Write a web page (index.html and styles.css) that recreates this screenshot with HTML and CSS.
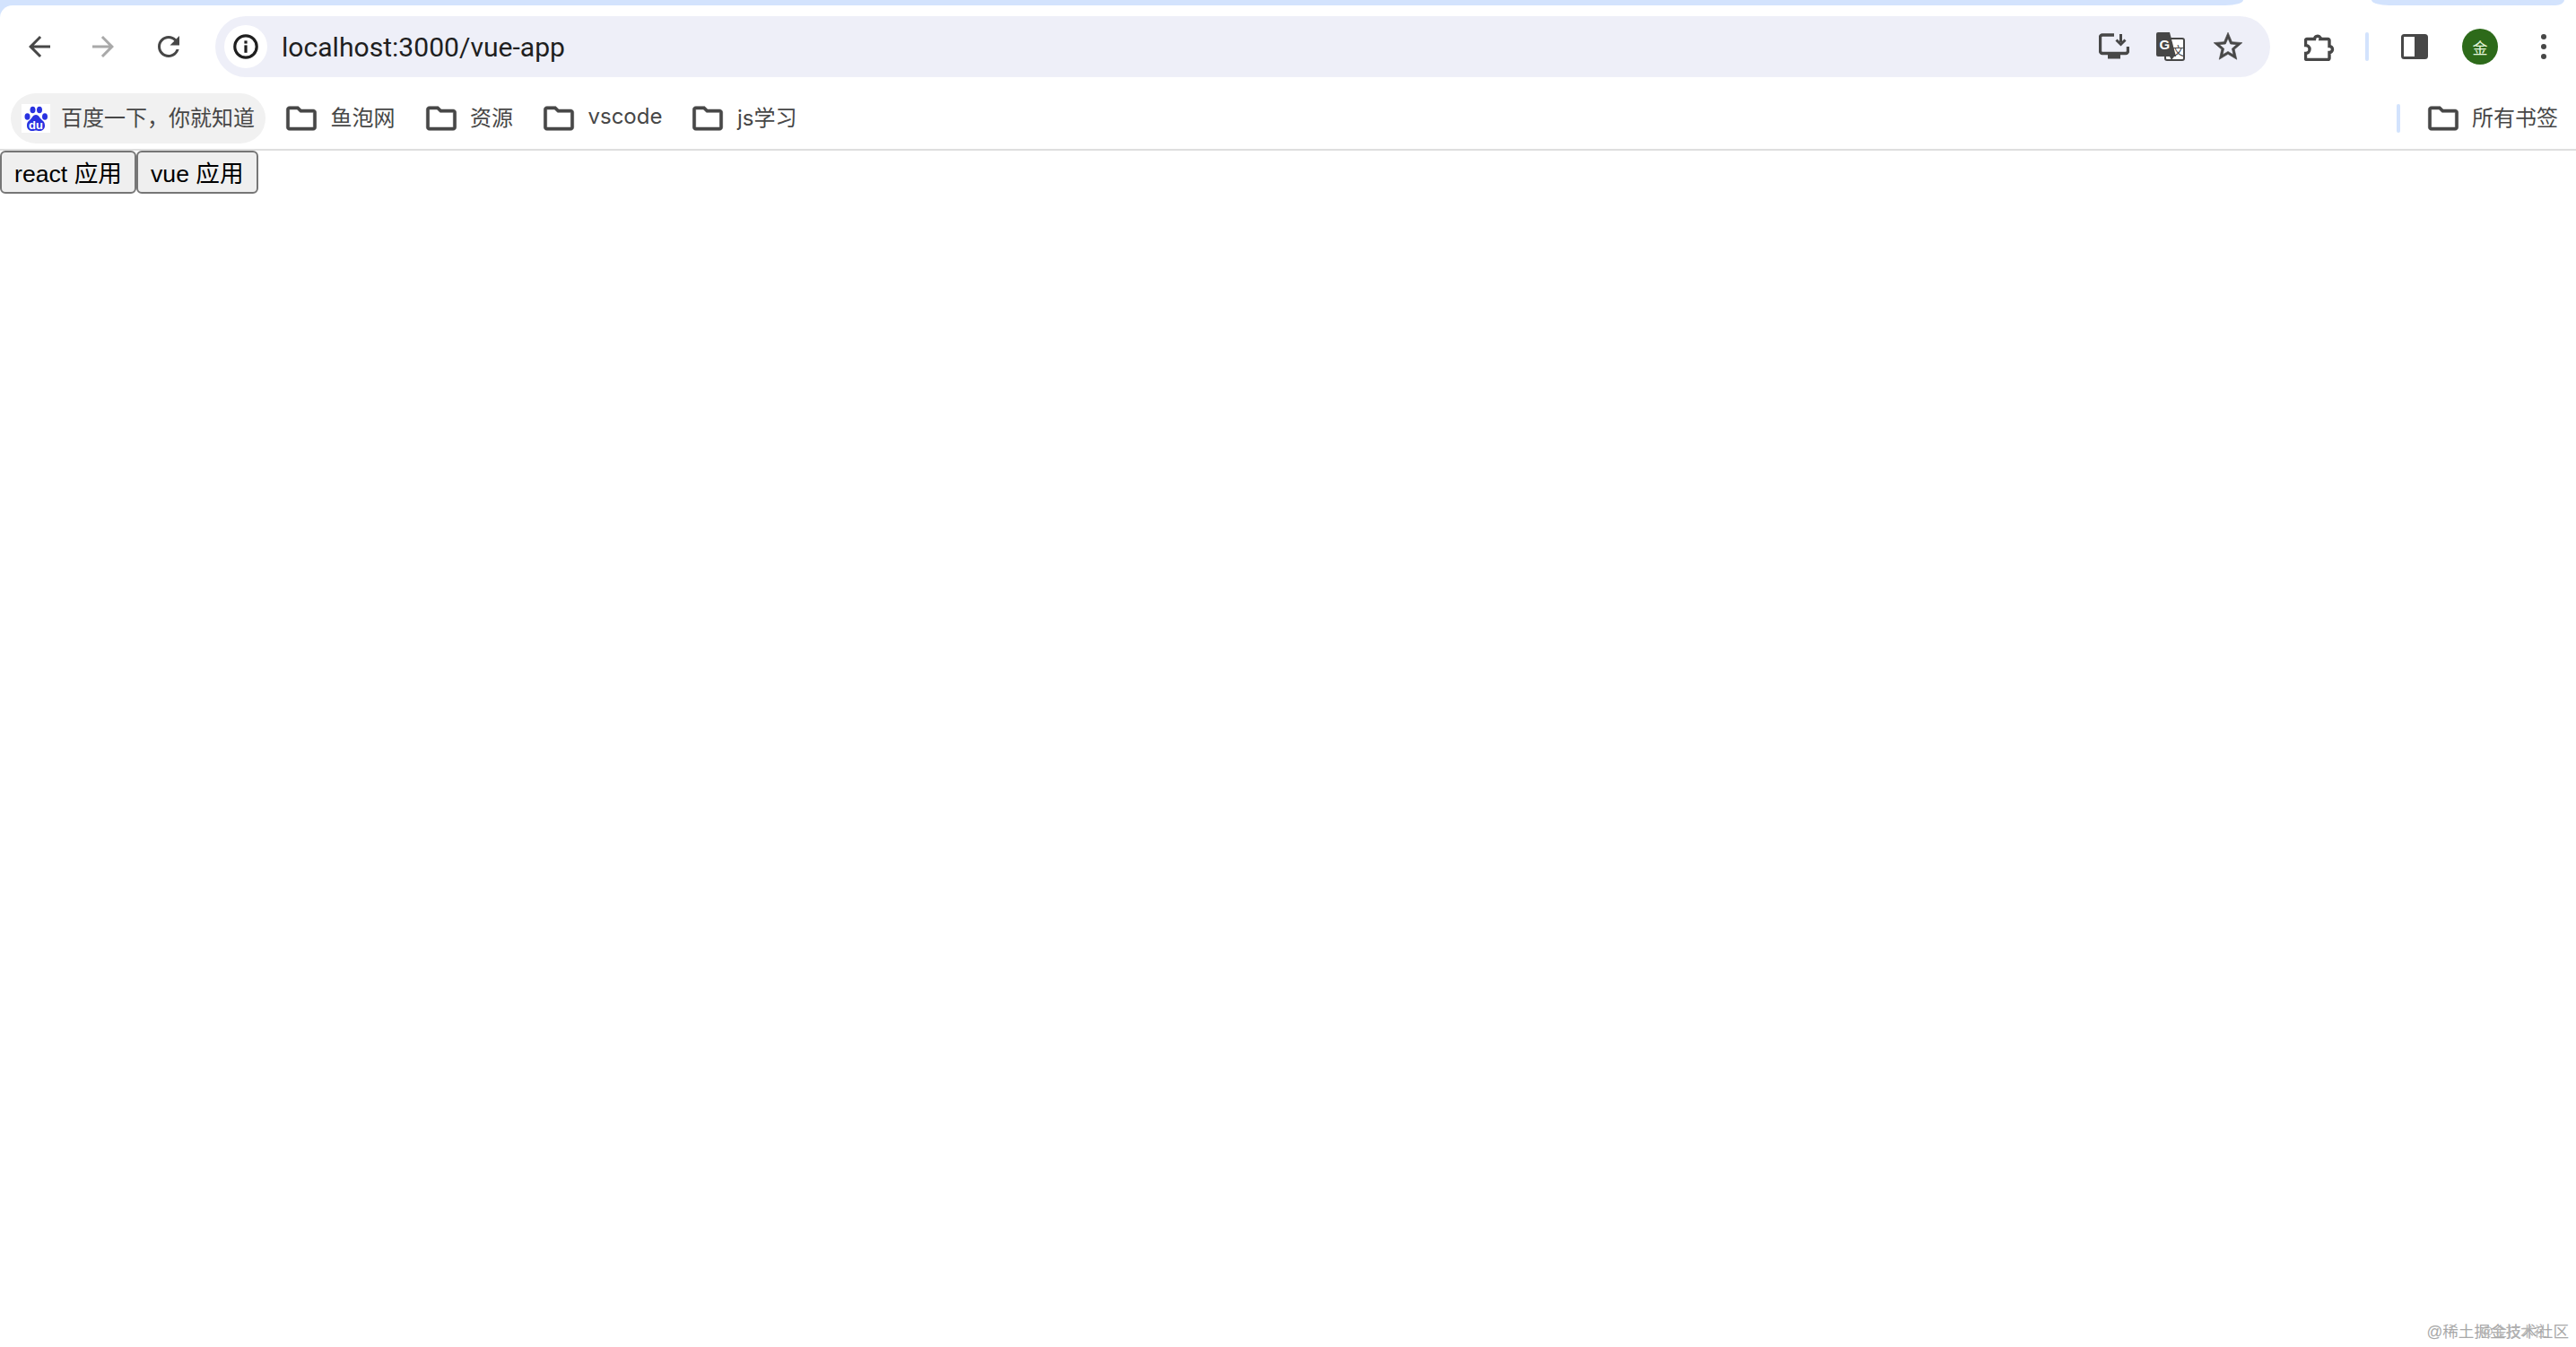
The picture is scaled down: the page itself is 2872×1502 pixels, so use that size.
FILE: index.html
```html
<!DOCTYPE html>
<html lang="zh">
<head>
<meta charset="utf-8">
<title>vue-app</title>
<link rel="stylesheet" href="styles.css">
</head>
<body>
<header class="chrome">
  <div class="tabstrip">
    <div class="strip strip-left"></div>
    <div class="strip strip-right"></div>
  </div>
  <div class="toolbar">
    <svg class="icon nav-back" viewBox="0 0 24 24"><path d="M20 11H7.83l5.59-5.59L12 4l-8 8 8 8 1.41-1.41L7.83 13H20v-2z"/></svg>
    <svg class="icon nav-forward" viewBox="0 0 24 24"><path d="M4 11h12.17l-5.59-5.59L12 4l8 8-8 8-1.41-1.41L16.17 13H4v-2z"/></svg>
    <svg class="icon nav-reload" viewBox="0 0 24 24"><path d="M17.65 6.35C16.2 4.9 14.21 4 12 4c-4.42 0-7.99 3.58-7.99 8s3.57 8 7.99 8c3.73 0 6.84-2.55 7.73-6h-2.08c-.82 2.33-3.04 4-5.65 4-3.31 0-6-2.69-6-6s2.69-6 6-6c1.66 0 3.14.69 4.22 1.78L13 11h7V4l-2.35 2.35z"/></svg>
    <div class="omnibox">
      <span class="site-info">
        <svg class="info-icon" viewBox="0 0 28 28"><circle cx="14" cy="14" r="12.2" fill="none" stroke="#1f1f1f" stroke-width="3.2"/><rect x="12.4" y="12.4" width="3.2" height="8.4" fill="#1f1f1f"/><rect x="12.4" y="7.4" width="3.2" height="3.2" fill="#1f1f1f"/></svg>
      </span>
      <span class="url">localhost:3000/vue-app</span>
      <div class="omni-actions">
        <svg class="act-install" viewBox="0 0 34 30"><path d="M17 2H4a2.500 2.500 0 0 0-2.500 2.500V20a2.500 2.500 0 0 0 2.500 2.500H30a2.500 2.500 0 0 0 2.500-2.500v-5" fill="none" stroke="#474747" stroke-width="3.4"/><rect x="10" y="23" width="14" height="5.500" fill="#474747"/><path d="M24.500 1v9M19.500 7.500l5 5 5-5" fill="none" stroke="#474747" stroke-width="3"/></svg>
        <svg class="act-translate" viewBox="0 0 32 32"><rect x="10" y="7" width="21" height="24" rx="2" fill="#fff" stroke="#474747" stroke-width="2"/><path d="M2 0h13l7 27H2a2 2 0 0 1-2-2V2a2 2 0 0 1 2-2z" fill="#474747"/><path d="M15 27h5l-3 4z" fill="#474747"/><text class="tr-g" x="3.500" y="19">G</text><text class="tr-x" x="18" y="25">文</text></svg>
        <svg class="act-star" viewBox="0 0 24 24"><path d="M22 9.240l-7.190-.620L12 2 9.190 8.630 2 9.240l5.460 4.730L5.820 21 12 17.270 18.180 21l-1.630-7.030L22 9.240zM12 15.400l-3.760 2.270 1-4.280-3.320-2.880 4.380-.380L12 6.100l1.710 4.040 4.380.380-3.320 2.880 1 4.280L12 15.400z"/></svg>
      </div>
    </div>
    <svg class="tool-puzzle" viewBox="0 0 34 32"><path d="M3 7.500h8.500a3.500 3.500 0 0 1 6.500-1.500 3 3 0 0 1 0 1.500h8.500a1.500 1.500 0 0 1 1.500 1.500v6.500a3.500 3.500 0 0 1 0 7V29a1.500 1.500 0 0 1-1.500 1.500H3A1.500 1.500 0 0 1 1.500 29v-5.500a4.500 4.500 0 0 0 0-9V9A1.500 1.500 0 0 1 3 7.500z" fill="none" stroke="#474747" stroke-width="3.400"/></svg>
    <span class="tool-divider"></span>
    <svg class="tool-panel" viewBox="0 0 30 28"><rect x="1.500" y="1.500" width="27" height="25" rx="2" fill="none" stroke="#474747" stroke-width="3"/><rect x="15" y="1.500" width="13.500" height="25" fill="#474747"/></svg>
    <span class="avatar">金</span>
    <span class="menu-dots"><i></i><i></i><i></i></span>
  </div>
  <nav class="bookmarks">
    <a class="chip">
      <svg class="favicon" viewBox="0 0 32 32"><rect width="32" height="32" fill="#fff"/><g fill="#2932e1"><ellipse cx="6.500" cy="14" rx="3" ry="3.800"/><ellipse cx="12.500" cy="6.500" rx="3" ry="3.800"/><ellipse cx="20" cy="6.500" rx="3" ry="3.800"/><ellipse cx="26" cy="14" rx="3" ry="3.800"/><path d="M16 12c3 0 4 3 6 5s4 3 4 7-3 6-6 6c-2 0-2.500-.5-4-.5S14 30 12 30c-3 0-6-2-6-6s2-5 4-7 3-5 6-5z"/></g><text class="fav-du" x="16" y="28" text-anchor="middle">du</text></svg>
      <span>百度一下，你就知道</span>
    </a>
    <a class="mark mark-first">
      <svg class="folder" viewBox="0 0 24 24"><path d="M9.170 6l2 2H20v10H4V6h5.170M10 4H4c-1.100 0-1.990.9-1.990 2L2 18c0 1.100.9 2 2 2h16c1.100 0 2-.9 2-2V8c0-1.100-.9-2-2-2h-8l-2-2z"/></svg>
      <span>鱼泡网</span>
    </a>
    <a class="mark">
      <svg class="folder" viewBox="0 0 24 24"><path d="M9.170 6l2 2H20v10H4V6h5.170M10 4H4c-1.100 0-1.990.9-1.990 2L2 18c0 1.100.9 2 2 2h16c1.100 0 2-.9 2-2V8c0-1.100-.9-2-2-2h-8l-2-2z"/></svg>
      <span>资源</span>
    </a>
    <a class="mark">
      <svg class="folder" viewBox="0 0 24 24"><path d="M9.170 6l2 2H20v10H4V6h5.170M10 4H4c-1.100 0-1.990.9-1.990 2L2 18c0 1.100.9 2 2 2h16c1.100 0 2-.9 2-2V8c0-1.100-.9-2-2-2h-8l-2-2z"/></svg>
      <span>vscode</span>
    </a>
    <a class="mark">
      <svg class="folder" viewBox="0 0 24 24"><path d="M9.170 6l2 2H20v10H4V6h5.170M10 4H4c-1.100 0-1.990.9-1.990 2L2 18c0 1.100.9 2 2 2h16c1.100 0 2-.9 2-2V8c0-1.100-.9-2-2-2h-8l-2-2z"/></svg>
      <span>js学习</span>
    </a>
    <div class="all-marks">
      <span class="marks-divider"></span>
      <a class="mark">
        <svg class="folder" viewBox="0 0 24 24"><path d="M9.170 6l2 2H20v10H4V6h5.170M10 4H4c-1.100 0-1.990.9-1.990 2L2 18c0 1.100.9 2 2 2h16c1.100 0 2-.9 2-2V8c0-1.100-.9-2-2-2h-8l-2-2z"/></svg>
        <span>所有书签</span>
      </a>
    </div>
  </nav>
</header>
<main class="app">
  <button class="app-btn" type="button">react 应用</button><button class="app-btn" type="button">vue 应用</button>
</main>
<div class="watermark">@稀土掘金技术社区</div>
</body>
</html>
```
FILE: styles.css
```css
html, body {
  margin: 0;
  height: 100%;
  background: #fff;
  overflow: hidden;
}
body {
  font-family: "Liberation Sans", "Noto Sans CJK SC", sans-serif;
}
.chrome {
  background: #d3e3fd;
}
.tabstrip {
  display: flex;
  height: 6px;
  background: #fff;
}
.strip {
  background: #d3e3fd;
}
.strip-left {
  flex: 0 0 2501px;
  border-bottom-right-radius: 20px 6px;
}
.strip-right {
  flex: 0 0 215px;
  margin-left: 143px;
  border-bottom-left-radius: 20px 6px;
  border-bottom-right-radius: 10px 6px;
}
.toolbar {
  display: flex;
  align-items: center;
  height: 90px;
  box-sizing: border-box;
  padding: 12px 0 10px 26px;
  background: #fff;
  border-top-left-radius: 14px;
}
.icon {
  flex: none;
  width: 36px;
  height: 36px;
  fill: #474747;
}
.nav-forward {
  margin-left: 35px;
  fill: #a9a9a9;
}
.nav-reload {
  margin-left: 37px;
}
.omnibox {
  flex: none;
  display: flex;
  align-items: center;
  box-sizing: border-box;
  width: 2291px;
  height: 68px;
  margin-left: 34px;
  padding: 0 31px 0 10px;
  border-radius: 34px;
  background: #eeeff8;
}
.site-info {
  display: flex;
  align-items: center;
  justify-content: center;
  width: 48px;
  height: 48px;
  border-radius: 50%;
  background: #fff;
}
.info-icon {
  width: 28px;
  height: 28px;
}
.url {
  margin-left: 16px;
  font-family: Roboto, "Liberation Sans", sans-serif;
  font-size: 30.100px;
  color: #1f1f1f;
}
.omni-actions {
  display: flex;
  align-items: center;
  margin-left: auto;
}
.act-install {
  width: 34px;
  height: 30px;
}
.act-translate {
  width: 32px;
  height: 32px;
  margin-left: 30px;
}
.act-star {
  width: 38px;
  height: 38px;
  margin-left: 29px;
  margin-right: -3px;
  fill: #474747;
  stroke: #474747;
  stroke-width: 0.4;
}
.tr-g {
  font: bold 15px "Liberation Sans", sans-serif;
  fill: #fff;
}
.tr-x {
  font: 13px "Noto Sans CJK SC", sans-serif;
  fill: #474747;
}
.tool-puzzle {
  flex: none;
  width: 34px;
  height: 32px;
  margin-left: 38px;
}
.tool-divider {
  flex: none;
  width: 4px;
  height: 32px;
  margin-left: 34px;
  border-radius: 2px;
  background: #d3e3fd;
}
.tool-panel {
  flex: none;
  width: 30px;
  height: 28px;
  margin-left: 36px;
}
.avatar {
  flex: none;
  display: flex;
  align-items: center;
  justify-content: center;
  width: 40px;
  height: 40px;
  margin-left: 38px;
  border-radius: 50%;
  background: #2d6a1a;
  color: #e4f5dc;
  font: 17px "Noto Sans CJK SC", sans-serif;
}
.menu-dots {
  flex: none;
  display: flex;
  flex-direction: column;
  gap: 5px;
  margin-left: 48px;
}
.menu-dots i {
  display: block;
  width: 6px;
  height: 6px;
  border-radius: 50%;
  background: #474747;
}
.bookmarks {
  display: flex;
  align-items: center;
  box-sizing: border-box;
  height: 72px;
  padding: 2px 20px 0 12px;
  background: #fff;
  border-bottom: 2px solid #dedede;
  font-family: Inter, "Noto Sans CJK SC", sans-serif;
  font-size: 24px;
  color: #474747;
}
.chip {
  display: flex;
  align-items: center;
  gap: 12px;
  box-sizing: border-box;
  width: 284px;
  height: 56px;
  padding-left: 12px;
  border-radius: 28px;
  background: #f1f1f1;
  white-space: nowrap;
}
.chip span,
.mark span {
  margin-bottom: 6px;
}
.favicon {
  flex: none;
  width: 32px;
  height: 32px;
}
.fav-du {
  font: bold 13px "Liberation Sans", sans-serif;
  fill: #fff;
}
.mark {
  display: flex;
  align-items: center;
  gap: 12.500px;
  margin-left: 31px;
}
.mark-first {
  margin-left: 20px;
}
.folder {
  flex: none;
  width: 40px;
  height: 40px;
  fill: #474747;
  stroke: #474747;
  stroke-width: 0.3;
}
.all-marks {
  display: flex;
  align-items: center;
  margin-left: auto;
}
.marks-divider {
  width: 4px;
  height: 32px;
  border-radius: 2px;
  background: #d3e3fd;
}
.all-marks .mark {
  gap: 12px;
  margin-left: 28px;
}
.app {
  display: flex;
}
.app-btn {
  box-sizing: border-box;
  height: 48px;
  margin: 0;
  padding: 0 14px 2px;
  border: 2px solid #767676;
  border-radius: 6px;
  background: #efefef;
  color: #000;
  font: 26.670px "Liberation Sans", "Noto Sans CJK SC", sans-serif;
  white-space: nowrap;
}
.watermark {
  position: absolute;
  right: 8px;
  bottom: 6px;
  font-size: 17.600px;
  color: #a8a8a8;
}
.watermark::after {
  content: "@金技术社";
  position: absolute;
  right: 24px;
  top: 2px;
  font-size: 15px;
  color: #b4b4b4;
}
```
